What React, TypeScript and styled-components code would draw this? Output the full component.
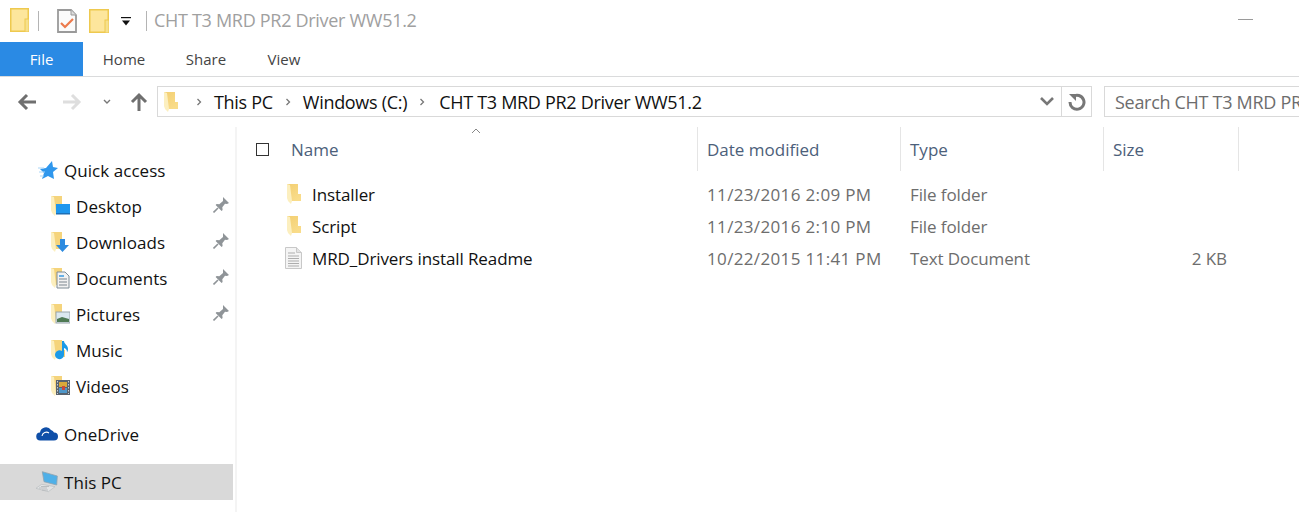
import React from "react";
import styled, { createGlobalStyle } from "styled-components";

const GlobalStyle = createGlobalStyle`
  html, body {
    margin: 0;
    padding: 0;
    background: #fff;
    height: 100%;
    overflow: hidden;
  }
  body {
    font-family: "Open Sans", "Noto Sans", sans-serif;
    font-size: 17px;
    letter-spacing: -0.1px;
    color: #111;
  }
  svg { display: block; flex: none; }
`;

const Window = styled.div`
  width: 1299px;
  height: 512px;
  overflow: hidden;
  display: flex;
  flex-direction: column;
`;

const TitleBar = styled.div`
  height: 42px;
  display: flex;
  align-items: center;
  padding-left: 10px;
  position: relative;
`;

const TitleDivider = styled.div<{ $left: number; $right: number }>`
  width: 1px;
  height: 20px;
  background: #b4b4b4;
  margin: 0 ${(p) => p.$right}px 0 ${(p) => p.$left}px;
`;

const TitleText = styled.span`
  color: #a0a0a0;
  font-size: 18px;
  letter-spacing: -0.3px;
  white-space: nowrap;
  margin-top: -2px;
`;

const Spacer = styled.span<{ $w: number }>`
  display: block;
  flex: none;
  width: ${(p) => p.$w}px;
`;

const QuickSlot = styled.div<{ $up?: number }>`
  margin-top: ${(p) => -(p.$up ?? 0)}px;
`;

const Minimize = styled.div`
  position: absolute;
  left: 1238px;
  top: 19px;
  width: 15px;
  height: 1px;
  background: #9a9a9a;
`;

const Ribbon = styled.div`
  height: 34px;
  display: flex;
  border-bottom: 1px solid #dadbdc;
`;

const RibbonTab = styled.div<{ $active?: boolean; $width: number }>`
  width: ${(p) => p.$width}px;
  display: flex;
  align-items: center;
  justify-content: center;
  font-size: 15px;
  letter-spacing: 0;
  color: ${(p) => (p.$active ? "#fff" : "#444")};
  background: ${(p) => (p.$active ? "#2a8ae4" : "transparent")};
`;

const AddressRow = styled.div`
  height: 31px;
  margin-top: 9px;
  display: flex;
  align-items: center;
  font-size: 18px;
  letter-spacing: -0.3px;
`;

const NavButtons = styled.div`
  width: 157px;
  height: 100%;
  display: flex;
  align-items: center;
  padding-left: 17px;
  box-sizing: border-box;
`;

const AddressBox = styled.div`
  width: 935px;
  height: 31px;
  box-sizing: border-box;
  border: 1px solid #d9d9d9;
  display: flex;
  align-items: center;
`;

const Crumbs = styled.div`
  flex: 1;
  display: flex;
  align-items: center;
  padding-left: 5px;
  white-space: nowrap;
`;

const Crumb = styled.span<{ $inset?: number }>`
  color: #111;
  margin-left: ${(p) => p.$inset ?? 0}px;
`;

const Chevron = styled.div`
  width: 28px;
  display: flex;
  justify-content: center;
`;

const Refresh = styled.div`
  width: 29px;
  height: 100%;
  border-left: 1px solid #d9d9d9;
  display: flex;
  align-items: center;
  justify-content: center;
`;

const SearchBox = styled.div`
  margin-left: 12px;
  flex: 1;
  height: 31px;
  box-sizing: border-box;
  border: 1px solid #d9d9d9;
  border-right: none;
  display: flex;
  align-items: center;
  padding-left: 10px;
  color: #6d6d6d;
  white-space: nowrap;
  overflow: hidden;
`;

const Body = styled.div`
  flex: 1;
  display: flex;
  margin-top: 10px;
  min-height: 0;
`;

const Sidebar = styled.div`
  width: 237px;
  box-sizing: border-box;
  border-right: 2px solid #f4f4f4;
  padding: 25px 2px 0 0;
  letter-spacing: 0.05px;
`;

const NavRow = styled.div<{ $depth?: number; $gap?: number; $selected?: boolean }>`
  height: 36px;
  margin-top: ${(p) => p.$gap ?? 0}px;
  display: flex;
  align-items: center;
  padding-left: ${(p) => (p.$depth ? 50 : 36)}px;
  background: ${(p) => (p.$selected ? "#d9d9d9" : "transparent")};
  position: relative;
`;

const NavLabel = styled.span`
  margin-left: 6px;
`;

const Pin = styled.div`
  position: absolute;
  left: 213px;
  top: 9px;
`;

const Main = styled.div`
  flex: 1;
`;

const Columns = styled.div`
  display: grid;
  grid-template-columns: 461px 203px 203px 135px;
`;

const HeaderRow = styled(Columns)`
  height: 44px;
  margin-bottom: 7px;
  letter-spacing: 0;
`;

const HeaderCell = styled.div<{ $first?: boolean }>`
  display: flex;
  align-items: center;
  position: relative;
  box-sizing: border-box;
  border-right: 1px solid #e5e5e5;
  padding-left: ${(p) => (p.$first ? 19 : 9)}px;
  color: #4c607a;
`;

const CheckBox = styled.div`
  width: 11px;
  height: 11px;
  border: 1px solid #333;
  margin-right: 22px;
`;

const SortCaret = styled.div`
  position: absolute;
  left: 234px;
  top: 1px;
`;

const FileRow = styled(Columns)`
  height: 32px;
`;

const FileCell = styled.div<{ $muted?: boolean; $right?: boolean; $wide?: boolean }>`
  display: flex;
  align-items: center;
  padding-left: 9px;
  justify-content: ${(p) => (p.$right ? "flex-end" : "flex-start")};
  padding-right: ${(p) => (p.$right ? 12 : 0)}px;
  color: ${(p) => (p.$muted ? "#6d6d6d" : "#111")};
  ${(p) => p.$wide && "letter-spacing: 0.35px;"}
`;

const NameCell = styled.div`
  display: flex;
  align-items: center;
  padding-left: 48px;
  color: #111;
`;

const FileIconBox = styled.div`
  width: 17px;
  margin-right: 10px;
  display: flex;
  justify-content: center;
`;

const FolderSmall = () => (
  <svg width="14" height="20" viewBox="0 0 14 20">
    <defs>
      <linearGradient id="folderBack" x1="0" y1="0" x2="0.6" y2="1">
        <stop offset="0" stopColor="#f3cf72" />
        <stop offset="1" stopColor="#f9dc8a" />
      </linearGradient>
    </defs>
    <path d="M0 0h11v10h3v7H4z" fill="url(#folderBack)" />
    <path d="M0 0l3 1 2 16-1 3-3-3-1-3z" fill="#fcefbf" />
  </svg>
);

const QuickDoc = () => (
  <svg width="20" height="24" viewBox="0 0 20 24">
    <path d="M1 1h13l5 5v17H1z" fill="#fbfbfb" stroke="#9a9a9a" strokeWidth="1.8" />
    <path d="M14 1v5h5" fill="#dcdcdc" stroke="#9a9a9a" />
    <path d="M4 14l4 4 8-8" fill="none" stroke="#ec7a4c" strokeWidth="2.2" />
  </svg>
);

const TitleFolder = ({ width }: { width: number }) => (
  <svg width={width} height="24" viewBox={`0 0 ${width} 24`}>
    <rect x="0.75" y="0.75" width={width - 1.5} height="22.5" fill="#fde69c" stroke="#eec94f" strokeWidth="1.5" />
    <rect x={width - 4} y="11" width="4" height="13" fill="#f6e08c" stroke="#eec94f" />
  </svg>
);

const SmallDown = () => (
  <svg width="10" height="9" viewBox="0 0 10 9">
    <rect x="0" y="0" width="10" height="1.2" fill="#111" />
    <path d="M1 3.5h8L5 8.5z" fill="#111" />
  </svg>
);

const Arrow = ({ dir, color }: { dir: "left" | "right" | "up"; color: string }) => {
  const rotate = dir === "left" ? 0 : dir === "right" ? 180 : 90;
  return (
    <svg width="20" height="20" viewBox="0 0 20 20" style={{ transform: `rotate(${rotate}deg)` }}>
      <path d="M19 10H3M10 3l-7 7 7 7" fill="none" stroke={color} strokeWidth="3" />
    </svg>
  );
};

const Sep = () => (
  <svg width="30" height="10" viewBox="0 0 30 10">
    <path d="M13.5 2l3 3-3 3" fill="none" stroke="#777" strokeWidth="1.3" />
  </svg>
);

const Star = () => (
  <svg width="22" height="20" viewBox="0 0 22 20">
    <path d="M16 1l1 6 5 1-5 4 1 7-6-3-6 3 2-6-4-4 6-1z" fill="#2f97ed" />
    <path d="M2 8h6M3 12h6M4 16h4" stroke="#a9d5f7" strokeWidth="1" />
  </svg>
);

const LibFolder = ({ children }: { children: React.ReactNode }) => (
  <svg width="20" height="22" viewBox="0 0 20 22">
    <path d="M1 1h11v10h3v7H5z" fill="#f5d47c" />
    <path d="M1 1l3 1 2 16-1 3-3-3-1-3z" fill="#fcefbf" />
    {children}
  </svg>
);

const PinIcon = () => (
  <svg width="16" height="16" viewBox="0 0 16 16">
    <path d="M10 0l6 6-2 1-2-.3-2.7 3.6.3 2.7-1 1-6-6 1-1 2.7.3L10 4z" fill="#8f9498" />
    <path d="M5 11l-4.5 4.5" stroke="#8f9498" strokeWidth="1.6" />
  </svg>
);

const Cloud = () => (
  <svg width="22" height="14" viewBox="0 0 22 14">
    <path d="M4.5 13.5a4 4 0 0 1-.5-8 6 6 0 0 1 11-2.5 4.5 4.5 0 0 1 3 2.5 4 4 0 0 1 0 8z" fill="#0f4fa8" />
    <path d="M6 9a4.5 4.5 0 0 1 7-3" stroke="#fff" strokeWidth="1.1" fill="none" />
  </svg>
);

const Computer = () => (
  <svg width="22" height="22" viewBox="0 0 22 22">
    <path d="M0 17.3l5.7-4 13.3 2.4-6.7 5z" fill="#e2e4e5" stroke="#b4b8bb" strokeWidth="0.6" />
    <path d="M3 17h8M5 15.5h8M6 19h6" stroke="#a9adb0" strokeWidth="0.7" />
    <path d="M6.3.7l15 4.3-.6 9-12.7-3.3z" fill="#4fb0e8" stroke="#8fa3b0" strokeWidth="0.8" />
  </svg>
);

const TextFile = () => (
  <svg width="17" height="22" viewBox="0 0 17 22">
    <path d="M0.5 0.5h11l5 5v16h-16z" fill="#f4f4f4" stroke="#c8c8c8" />
    <path d="M11.5 0.5v5h5" fill="#e2e2e2" stroke="#c8c8c8" />
    <path d="M3 6h7M3 9h11M3 11.5h11M3 14h11M3 16.5h11M3 19h11" stroke="#adadad" strokeWidth="1" />
  </svg>
);

const quickItems = [
  {
    label: "Desktop",
    pinned: true,
    overlay: (
      <>
        <rect x="6" y="9" width="14" height="9" fill="#1f97ee" />
        <rect x="6" y="18" width="14" height="1.5" fill="#1d6fb5" />
      </>
    ),
  },
  {
    label: "Downloads",
    pinned: true,
    overlay: <path d="M10 8h5v6h4l-6.5 7L6 14h4z" fill="#2d8be0" />,
  },
  {
    label: "Documents",
    pinned: true,
    overlay: (
      <>
        <path d="M7 5h8l4 4v12H7z" fill="#f2f2f2" stroke="#7f8c96" />
        <path d="M9 9h5" stroke="#3a9ae0" strokeWidth="1.5" />
        <path d="M9 12h8M9 15h8M9 18h8" stroke="#7a858e" />
      </>
    ),
  },
  {
    label: "Pictures",
    pinned: true,
    overlay: (
      <>
        <rect x="6" y="9" width="14" height="11" fill="#dbe8ef" stroke="#9aa5ab" />
        <path d="M7 16l5-2 7 2v3H7z" fill="#4f7a54" />
      </>
    ),
  },
  {
    label: "Music",
    overlay: <path d="M12 2h2c0 3 4 4 4 8 0 1.5-.5 3-1 3 0-2-1-3.5-3-4v7a4.5 4.5 0 1 1-2-4z" fill="#1b9ae8" />,
  },
  {
    label: "Videos",
    overlay: (
      <>
        <rect x="6" y="5" width="14" height="15" fill="#59636e" />
        <rect x="9" y="7" width="8" height="5" fill="#d9a93a" />
        <rect x="9" y="13" width="8" height="5" fill="#4f97c9" />
        <path d="M7.5 6v13M18.5 6v13" stroke="#c8ced3" strokeWidth="1" strokeDasharray="1.5 1.5" />
        <path d="M12 11h3v4h-3z" fill="#c9483c" />
      </>
    ),
  },
];

const files = [
  { name: "Installer", date: "11/23/2016 2:09 PM", type: "File folder", size: "", icon: <FolderSmall /> },
  { name: "Script", date: "11/23/2016 2:10 PM", type: "File folder", size: "", icon: <FolderSmall /> },
  { name: "MRD_Drivers install Readme", date: "10/22/2015 11:41 PM", type: "Text Document", size: "2 KB", icon: <TextFile /> },
];

export default function App() {
  return (
    <Window>
      <GlobalStyle />
      <TitleBar>
        <QuickSlot $up={3}>
          <TitleFolder width={19} />
        </QuickSlot>
        <TitleDivider $left={9} $right={18} />
        <QuickDoc />
        <Spacer $w={12} />
        <TitleFolder width={20} />
        <Spacer $w={12} />
        <SmallDown />
        <TitleDivider $left={15} $right={7} />
        <TitleText>CHT T3 MRD PR2 Driver WW51.2</TitleText>
        <Minimize />
      </TitleBar>
      <Ribbon>
        <RibbonTab $active $width={83}>File</RibbonTab>
        <RibbonTab $width={82}>Home</RibbonTab>
        <RibbonTab $width={82}>Share</RibbonTab>
        <RibbonTab $width={74}>View</RibbonTab>
      </Ribbon>
      <AddressRow>
        <NavButtons>
          <Arrow dir="left" color="#6f6f6f" />
          <Spacer $w={25} />
          <Arrow dir="right" color="#dedede" />
          <Spacer $w={21} />
          <svg width="8" height="6" viewBox="0 0 8 6">
            <path d="M1 1l3 3 3-3" fill="none" stroke="#777" strokeWidth="1.4" />
          </svg>
          <Spacer $w={18} />
          <Arrow dir="up" color="#6f6f6f" />
        </NavButtons>
        <AddressBox>
          <Crumbs>
            <Spacer $w={1} />
            <FolderSmall />
            <Spacer $w={6} />
            <Sep />
            <Crumb>This PC</Crumb>
            <Sep />
            <Crumb>Windows (C:)</Crumb>
            <Sep />
            <Crumb $inset={2}>CHT T3 MRD PR2 Driver WW51.2</Crumb>
          </Crumbs>
          <Chevron>
            <svg width="14" height="9" viewBox="0 0 14 9">
              <path d="M1 1l6 6 6-6" fill="none" stroke="#777" strokeWidth="2.6" />
            </svg>
          </Chevron>
          <Refresh>
            <svg width="18" height="18" viewBox="0 0 18 18">
              <path d="M5 3.5A7 7 0 1 1 2 9" fill="none" stroke="#777" strokeWidth="3" />
              <path d="M1 1h7v7z" fill="#777" />
            </svg>
          </Refresh>
        </AddressBox>
        <SearchBox>Search CHT T3 MRD PR2 Driver WW51.2</SearchBox>
      </AddressRow>
      <Body>
        <Sidebar>
          <NavRow>
            <Star />
            <NavLabel>Quick access</NavLabel>
          </NavRow>
          {quickItems.map((item) => (
            <NavRow key={item.label} $depth={1}>
              <LibFolder>{item.overlay}</LibFolder>
              <NavLabel>{item.label}</NavLabel>
              {item.pinned && (
                <Pin>
                  <PinIcon />
                </Pin>
              )}
            </NavRow>
          ))}
          <NavRow $gap={12}>
            <Cloud />
            <NavLabel>OneDrive</NavLabel>
          </NavRow>
          <NavRow $gap={12} $selected>
            <Computer />
            <NavLabel>This PC</NavLabel>
          </NavRow>
        </Sidebar>
        <Main>
          <HeaderRow>
            <HeaderCell $first>
              <CheckBox />
              Name
              <SortCaret>
                <svg width="10" height="6" viewBox="0 0 10 6">
                  <path d="M1 5l4-4 4 4" fill="none" stroke="#888" />
                </svg>
              </SortCaret>
            </HeaderCell>
            <HeaderCell>Date modified</HeaderCell>
            <HeaderCell>Type</HeaderCell>
            <HeaderCell>Size</HeaderCell>
          </HeaderRow>
          {files.map((file) => (
            <FileRow key={file.name}>
              <NameCell>
                <FileIconBox>{file.icon}</FileIconBox>
                {file.name}
              </NameCell>
              <FileCell $muted $wide>{file.date}</FileCell>
              <FileCell $muted>{file.type}</FileCell>
              <FileCell $muted $right>{file.size}</FileCell>
            </FileRow>
          ))}
        </Main>
      </Body>
    </Window>
  );
}
